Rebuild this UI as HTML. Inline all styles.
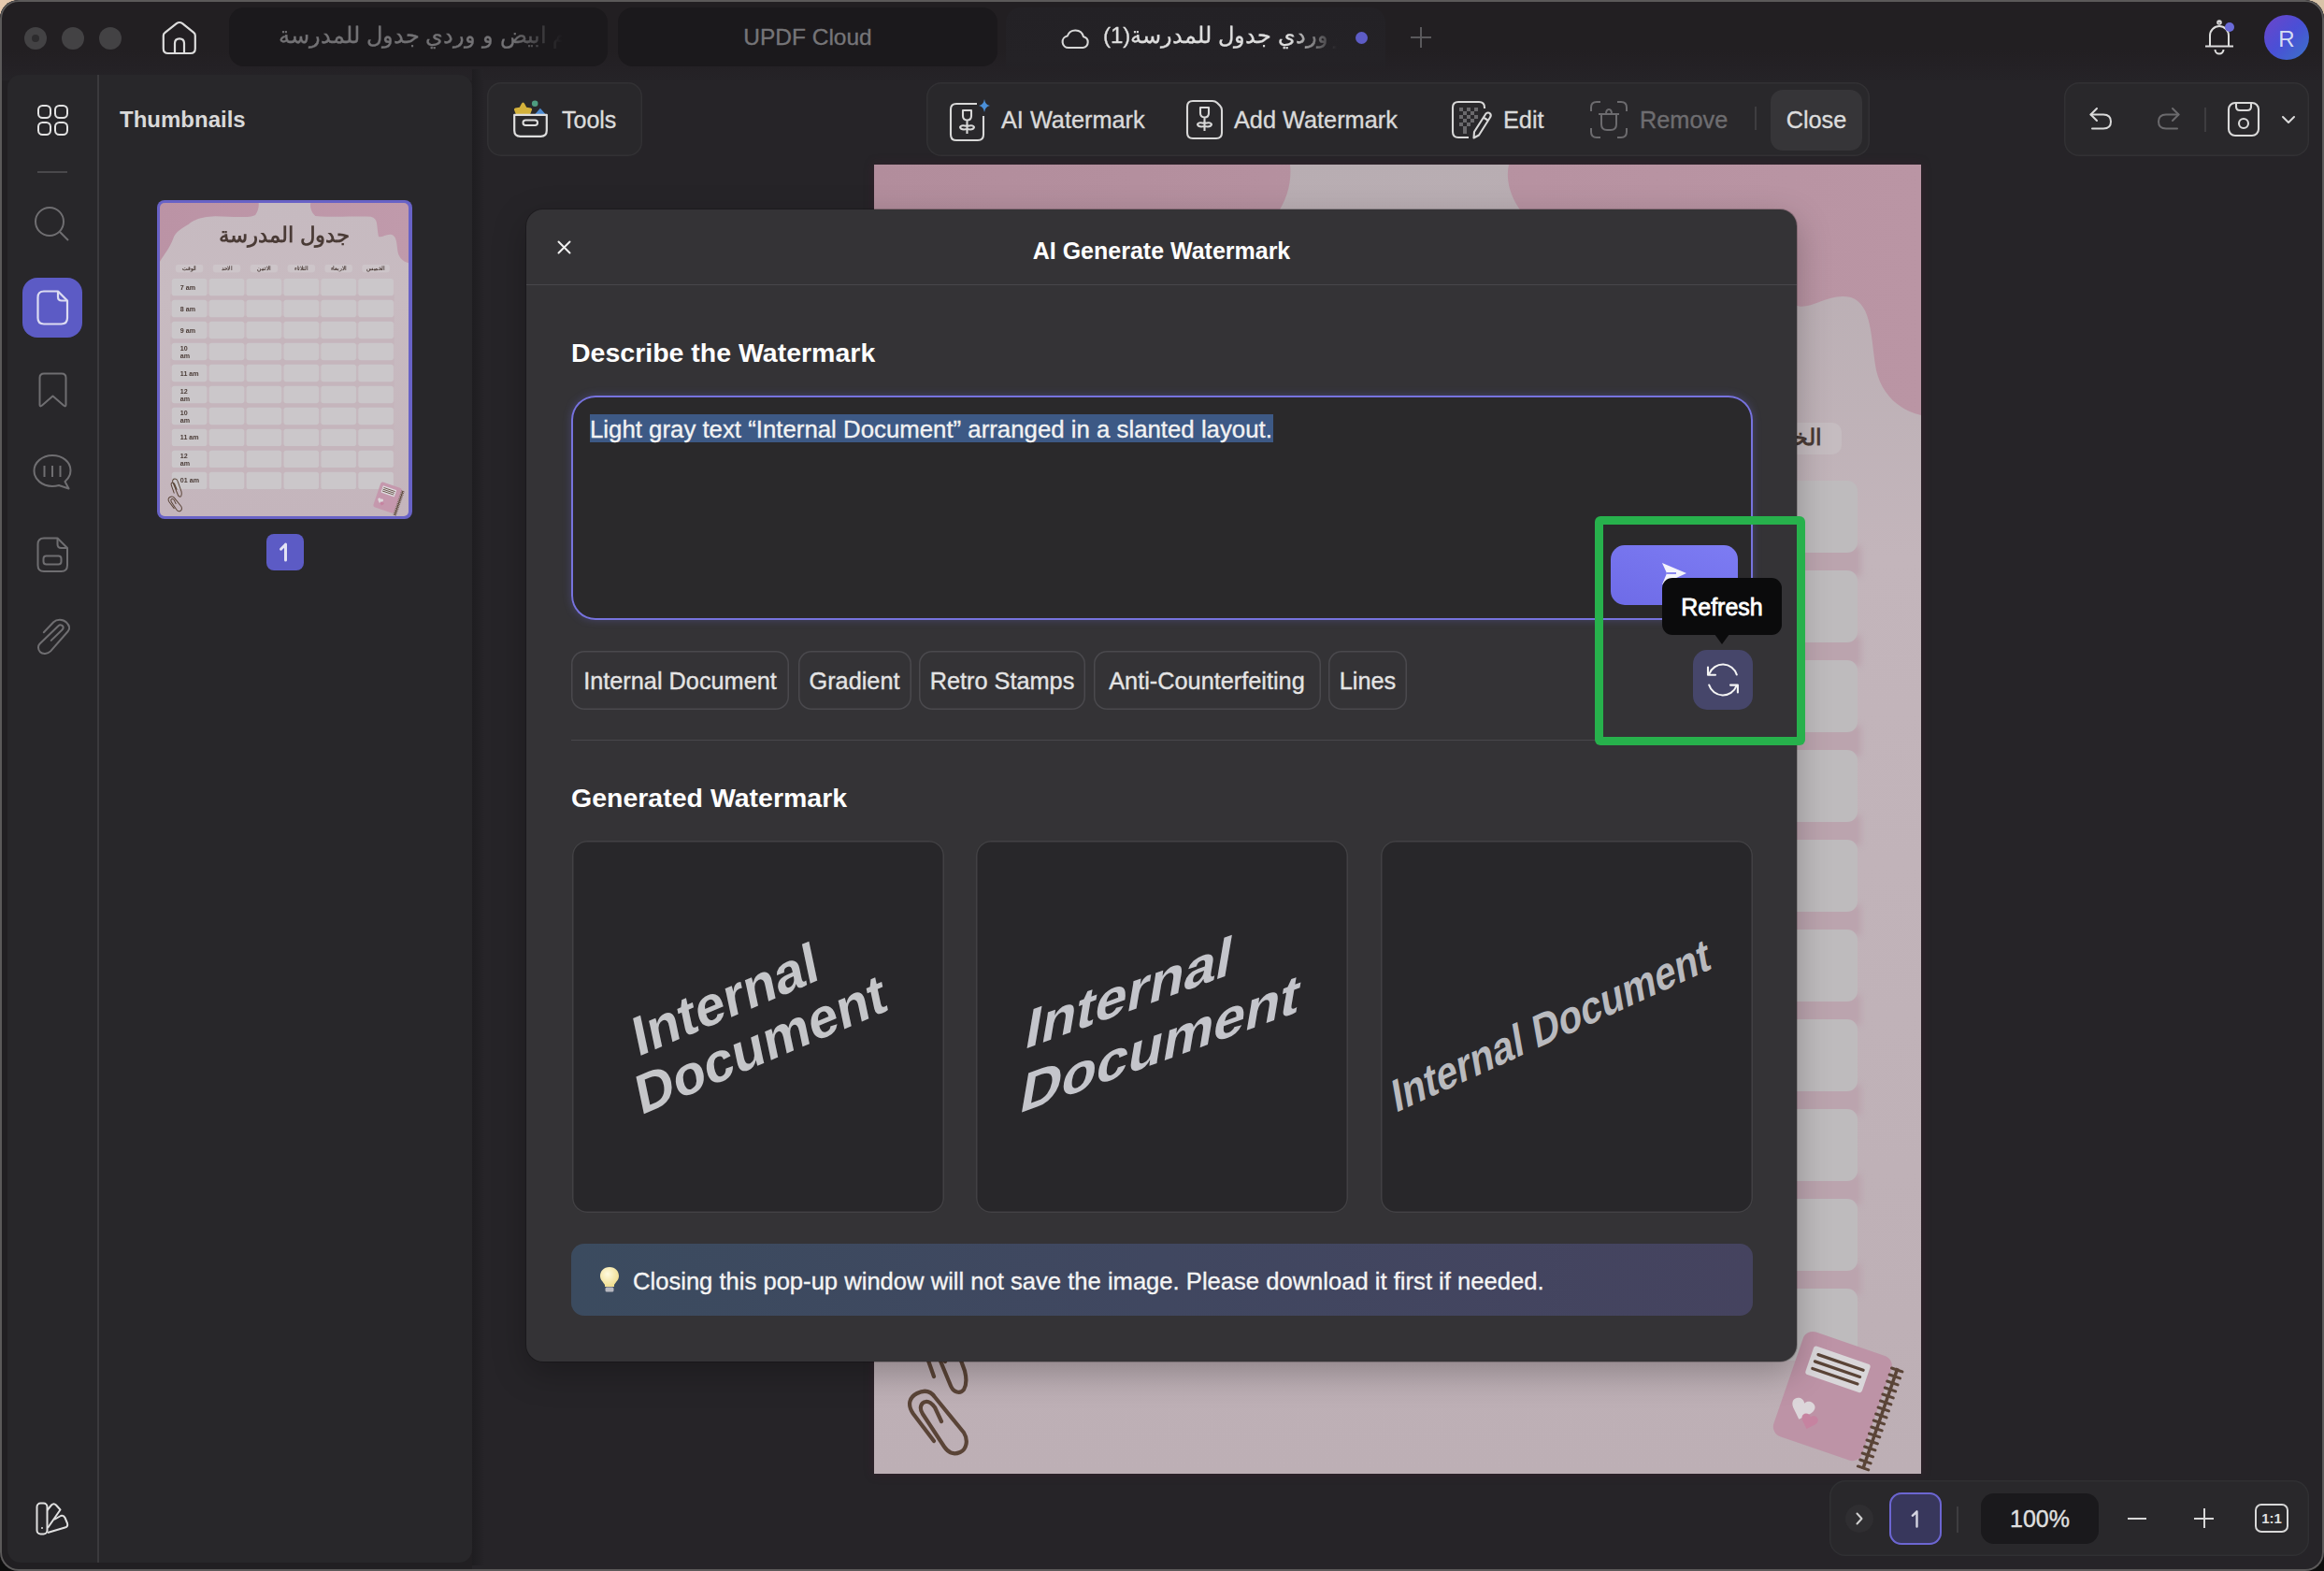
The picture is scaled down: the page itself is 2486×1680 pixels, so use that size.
<!DOCTYPE html>
<html><head><meta charset="utf-8">
<style>
*{box-sizing:border-box;margin:0;padding:0}
html,body{width:2486px;height:1680px;overflow:hidden;background:#0d0d0d}
body{font-family:"Liberation Sans",sans-serif;position:relative}
.a{position:absolute}
.win{left:0;top:0;width:2486px;height:1680px;border-radius:20px;background:#211f22;overflow:hidden;box-shadow:inset 0 0 0 2px #5a5858}
svg{position:absolute;overflow:visible}
.t{position:absolute;white-space:nowrap;line-height:1;-webkit-text-stroke:0.35px currentColor}
.t[style*="font-weight:bold"]{-webkit-text-stroke:0}
</style></head><body>
<div class="a" style="left:0;top:0;width:60px;height:30px;background:linear-gradient(90deg,#e8cbb0,#cdb79f)"></div>
<div class="a" style="right:0;top:0;width:40px;height:30px;background:#d8c3a8"></div>
<div class="a win">
<!-- TITLEBAR -->
<div class="a" style="left:0;top:0;width:2486px;height:86px;background:linear-gradient(180deg,#221f22 0%,#221f22 62%,#242125 84%,#252327 100%)"></div>
<div class="a" style="left:26px;top:29px;width:24px;height:24px;border-radius:50%;background:#434244"></div>
<div class="a" style="left:34px;top:37px;width:8px;height:8px;border-radius:50%;background:#2d2c2e"></div>
<div class="a" style="left:66px;top:29px;width:24px;height:24px;border-radius:50%;background:#434244"></div>
<div class="a" style="left:106px;top:29px;width:24px;height:24px;border-radius:50%;background:#434244"></div>
<svg style="left:173px;top:22px" width="38" height="37" viewBox="0 0 38 37" fill="none" stroke="#dcdcdc" stroke-width="2.2" stroke-linejoin="round"><path d="M3.5 12.8 L15.8 3.2 Q19 0.8 22.2 3.2 L34.3 12.8 Q35.8 14 35.8 16 V30 Q35.8 35 30.8 35 H6.8 Q1.8 35 1.8 30 V16 Q1.8 14 3.5 12.8 Z"/><path d="M14 35 V24.3 Q14 19.3 19 19.3 Q24 19.3 24 24.3 V35"/></svg>
<div class="a" style="left:245px;top:8px;width:405px;height:63px;border-radius:16px;background:#1b191c"></div>
<div class="a" style="left:298px;top:20px;width:304px;height:42px;overflow:hidden;-webkit-mask-image:linear-gradient(90deg,#000 82%,transparent 100%)"><div class="t" dir="rtl" style="left:0;top:6px;font-size:24px;color:#737275">نظام ابيض و وردي جدول للمدرسة</div></div>
<div class="a" style="left:661px;top:8px;width:406px;height:63px;border-radius:16px;background:#1b191c"></div>
<div class="t" style="left:661px;top:28px;width:406px;text-align:center;font-size:24.5px;color:#767578">UPDF Cloud</div>
<div class="a" style="left:1076px;top:8px;width:406px;height:70px;border-radius:16px 16px 0 0;background:linear-gradient(180deg,#232125,#242226 80%,rgba(36,34,38,0))"></div>
<svg style="left:1135px;top:27px" width="31" height="26" viewBox="0 0 31 26"><path d="M8 24 H23.5 A6 6 0 0 0 24 12.2 A9 9 0 0 0 6.8 11.5 A6.3 6.3 0 0 0 8 24 Z" fill="none" stroke="#d8d8d8" stroke-width="2.1" stroke-linejoin="round"/></svg>
<div class="a" style="left:1180px;top:20px;width:250px;height:42px;overflow:hidden;-webkit-mask-image:linear-gradient(90deg,#000 80%,transparent 100%)"><div class="t" dir="rtl" style="left:0;top:6px;font-size:24px;color:#dedede">نظام ابيض و وردي جدول للمدرسة(1)</div></div>
<div class="a" style="left:1450px;top:34px;width:13px;height:13px;border-radius:50%;background:#5d5cc6"></div>
<div class="a" style="left:1509px;top:39px;width:22px;height:2px;background:#5a595c"></div>
<div class="a" style="left:1519px;top:29px;width:2px;height:22px;background:#5a595c"></div>
<svg style="left:2358px;top:20px" width="32" height="40" viewBox="0 0 32 40"><path d="M16 4.5 V2.5 M6 29 V18 A10 10 0 0 1 26 18 V29 M1 29.5 H31 M11.5 33 A4.5 4.5 0 0 0 20.5 33" fill="none" stroke="#dcdcdc" stroke-width="2"/><circle cx="16" cy="4" r="2" fill="none" stroke="#dcdcdc" stroke-width="1.6"/></svg>
<div class="a" style="left:2380px;top:24px;width:10px;height:10px;border-radius:50%;background:#6a6ad8"></div>
<div class="a" style="left:2422px;top:16px;width:48px;height:48px;border-radius:50%;background:linear-gradient(135deg,#6d45c9 0%,#4a4fd6 50%,#3a74c8 100%)"></div>
<div class="t" style="left:2422px;top:30px;width:48px;text-align:center;font-size:24px;-webkit-text-stroke:0;color:#d6ddf2">R</div>
<!-- LEFT PANEL -->
<div class="a" style="left:0;top:86px;width:2486px;height:1594px;background:#211f22"></div>
<div class="a" style="left:8px;top:80px;width:497px;height:1591px;border-radius:14px;background:#28272a"></div>
<div class="a" style="left:104px;top:80px;width:1.5px;height:1591px;background:#3b3a3d"></div>
<svg style="left:40px;top:112px" width="33" height="33" viewBox="0 0 33 33" fill="none" stroke="#e2e2e2" stroke-width="2"><rect x="1" y="1" width="13" height="13" rx="4.5"/><rect x="19" y="1" width="13" height="13" rx="4.5"/><rect x="1" y="19" width="13" height="13" rx="4.5"/><rect x="19" y="19" width="13" height="13" rx="4.5"/></svg>
<div class="a" style="left:40px;top:183px;width:32px;height:1.5px;background:#49484b"></div>
<svg style="left:36px;top:220px" width="40" height="40" viewBox="0 0 40 40" fill="none" stroke="#6f6e71" stroke-width="2"><circle cx="17" cy="17" r="15"/><path d="M27.8 27.8 L37 37"/></svg>
<div class="a" style="left:24px;top:297px;width:64px;height:64px;border-radius:16px;background:#5c5bc5"></div>
<svg style="left:39px;top:310px" width="35" height="38" viewBox="0 0 35 38" fill="none" stroke="#dcdcf2" stroke-width="2.2" stroke-linejoin="round"><path d="M8 1.5 H23 L33 11.5 V30 Q33 36.5 26.5 36.5 H8 Q1.5 36.5 1.5 30 V8 Q1.5 1.5 8 1.5 Z"/><path d="M23 1.5 V7.5 Q23 11.5 27 11.5 H33"/></svg>
<svg style="left:41px;top:398px" width="31" height="39" viewBox="0 0 31 39" fill="none" stroke="#6f6e71" stroke-width="2" stroke-linejoin="round"><path d="M6 1.5 H25 Q29.5 1.5 29.5 6 V35 Q29.5 37.5 27 35.5 L15.5 25.5 L4 35.5 Q1.5 37.5 1.5 35 V6 Q1.5 1.5 6 1.5 Z"/></svg>
<svg style="left:35px;top:485px" width="43" height="40" viewBox="0 0 43 40" fill="none" stroke="#6f6e71" stroke-width="2" stroke-linejoin="round"><path d="M21 2 C32 2 40.5 9 40.5 18 C40.5 23 38 27 34.5 30 L38.5 37.5 L28 34 C25.8 34.6 23.5 35 21 35 C10 35 1.5 27.5 1.5 18.5 C1.5 9.5 10 2 21 2 Z"/><path d="M12.5 13 V25 M21 13 V25 M29.5 13 V25"/></svg>
<svg style="left:39px;top:574px" width="35" height="39" viewBox="0 0 35 39" fill="none" stroke="#6f6e71" stroke-width="2" stroke-linejoin="round"><path d="M8 1.5 H22.5 L33 12 V30.5 Q33 37 26.5 37 H8 Q1.5 37 1.5 30.5 V8 Q1.5 1.5 8 1.5 Z"/><path d="M22.5 1.5 V8 Q22.5 12 26.5 12 H33"/><rect x="7.5" y="20.5" width="19" height="9" rx="3"/></svg>
<svg style="left:40px;top:661px" width="36" height="40" viewBox="0 0 36 40" fill="none" stroke="#6f6e71" stroke-width="2" stroke-linecap="round" stroke-linejoin="round"><path d="M6.8 15.3 L17.3 4.2 C20.5 1 27 0.5 31 4.5 C34.5 8 34.8 11.5 32.8 14 L14.1 35.4 C11 38.5 5.5 38.8 3 36.2 C0.2 33.2 0.5 29.5 2.5 27.5 L22.5 8.3 C24 6.8 26.5 7.2 27.3 8.8 C28 10.2 27.6 11.5 26.5 12.5 L14.7 23.9"/></svg>
<div class="t" style="left:128px;top:116px;font-size:24px;font-weight:bold;color:#d9d9d9">Thumbnails</div>
<div class="a" style="left:168px;top:214px;width:273px;height:341px;border-radius:8px;background:#6862c6"></div>
<div class="a" style="left:171px;top:217px;width:266px;height:335px;overflow:hidden;border-radius:5px"><div class="a" style="left:0;top:0;width:1120px;height:1400px;transform-origin:0 0;transform:scale(0.2375,0.2393)"><div class="a" style="left:0;top:0;width:1120px;height:1400px;background:linear-gradient(180deg,#c8bbc1,#c4b5bc)"></div>
<div class="a" style="left:0;top:0;width:1120px;height:280px;background:linear-gradient(90deg,#bb93a5,#c09aab)"></div>
<svg style="left:0;top:0" width="1120" height="1400" viewBox="0 0 1120 1400"><defs><linearGradient id="gt" x1="0" y1="0" x2="0" y2="1"><stop offset="0" stop-color="#c6bac0"/><stop offset="0.3" stop-color="#c8bbc1"/><stop offset="1" stop-color="#c4b5bc"/></linearGradient></defs><path d="M445 0 C447 18 442 38 430 54 C405 68 330 62 250 60 C170 62 145 85 130 95 C95 115 70 130 60 160 C45 200 20 230 0 262 V1400 H1120 V268 C1095 262 1078 245 1072 220 C1066 185 1068 150 1045 142 C1020 136 1000 158 985 150 C975 100 985 70 950 62 C880 58 790 66 700 58 C686 46 674 22 679 0 Z" fill="url(#gt)"/></svg>
<div class="t" dir="rtl" style="left:0;top:96px;width:1120px;text-align:center;font-size:96px;font-weight:bold;color:#4a3b36">جدول المدرسة</div>
<div class="a" style="left:71px;top:276px;width:124px;height:34px;border-radius:10px;background:#cdc5c9"></div>
<div class="t" dir="rtl" style="left:71px;top:280px;width:124px;text-align:center;font-size:24px;font-weight:bold;color:#4a3b36">الوقت</div>
<div class="a" style="left:239px;top:276px;width:124px;height:34px;border-radius:10px;background:#cdc5c9"></div>
<div class="t" dir="rtl" style="left:239px;top:280px;width:124px;text-align:center;font-size:24px;font-weight:bold;color:#4a3b36">الاحد</div>
<div class="a" style="left:407px;top:276px;width:124px;height:34px;border-radius:10px;background:#cdc5c9"></div>
<div class="t" dir="rtl" style="left:407px;top:280px;width:124px;text-align:center;font-size:24px;font-weight:bold;color:#4a3b36">الاثنين</div>
<div class="a" style="left:575px;top:276px;width:124px;height:34px;border-radius:10px;background:#cdc5c9"></div>
<div class="t" dir="rtl" style="left:575px;top:280px;width:124px;text-align:center;font-size:24px;font-weight:bold;color:#4a3b36">الثلاثاء</div>
<div class="a" style="left:743px;top:276px;width:124px;height:34px;border-radius:10px;background:#cdc5c9"></div>
<div class="t" dir="rtl" style="left:743px;top:280px;width:124px;text-align:center;font-size:24px;font-weight:bold;color:#4a3b36">الاربعاء</div>
<div class="a" style="left:911px;top:276px;width:124px;height:34px;border-radius:10px;background:#cdc5c9"></div>
<div class="t" dir="rtl" style="left:911px;top:280px;width:124px;text-align:center;font-size:24px;font-weight:bold;color:#4a3b36">الخميس</div>
<div class="a" style="left:48px;top:408px;width:1008px;height:32px;background:#c5b5bc;filter:blur(3px)"></div>
<div class="a" style="left:54px;top:338px;width:158px;height:77px;border-radius:11px;background:#cbc7ca"></div>
<div class="a" style="left:222px;top:338px;width:158px;height:77px;border-radius:11px;background:#cbc7ca"></div>
<div class="a" style="left:390px;top:338px;width:158px;height:77px;border-radius:11px;background:#cbc7ca"></div>
<div class="a" style="left:558px;top:338px;width:158px;height:77px;border-radius:11px;background:#cbc7ca"></div>
<div class="a" style="left:726px;top:338px;width:158px;height:77px;border-radius:11px;background:#cbc7ca"></div>
<div class="a" style="left:894px;top:338px;width:158px;height:77px;border-radius:11px;background:#cbc7ca"></div>
<div class="t" style="left:92px;top:362px;font-size:30px;font-weight:bold;color:#4a3b36">7 am</div>
<div class="a" style="left:48px;top:504px;width:1008px;height:32px;background:#c5b5bc;filter:blur(3px)"></div>
<div class="a" style="left:54px;top:434px;width:158px;height:77px;border-radius:11px;background:#cbc7ca"></div>
<div class="a" style="left:222px;top:434px;width:158px;height:77px;border-radius:11px;background:#cbc7ca"></div>
<div class="a" style="left:390px;top:434px;width:158px;height:77px;border-radius:11px;background:#cbc7ca"></div>
<div class="a" style="left:558px;top:434px;width:158px;height:77px;border-radius:11px;background:#cbc7ca"></div>
<div class="a" style="left:726px;top:434px;width:158px;height:77px;border-radius:11px;background:#cbc7ca"></div>
<div class="a" style="left:894px;top:434px;width:158px;height:77px;border-radius:11px;background:#cbc7ca"></div>
<div class="t" style="left:92px;top:458px;font-size:30px;font-weight:bold;color:#4a3b36">8 am</div>
<div class="a" style="left:48px;top:600px;width:1008px;height:32px;background:#c5b5bc;filter:blur(3px)"></div>
<div class="a" style="left:54px;top:530px;width:158px;height:77px;border-radius:11px;background:#cbc7ca"></div>
<div class="a" style="left:222px;top:530px;width:158px;height:77px;border-radius:11px;background:#cbc7ca"></div>
<div class="a" style="left:390px;top:530px;width:158px;height:77px;border-radius:11px;background:#cbc7ca"></div>
<div class="a" style="left:558px;top:530px;width:158px;height:77px;border-radius:11px;background:#cbc7ca"></div>
<div class="a" style="left:726px;top:530px;width:158px;height:77px;border-radius:11px;background:#cbc7ca"></div>
<div class="a" style="left:894px;top:530px;width:158px;height:77px;border-radius:11px;background:#cbc7ca"></div>
<div class="t" style="left:92px;top:554px;font-size:30px;font-weight:bold;color:#4a3b36">9 am</div>
<div class="a" style="left:48px;top:696px;width:1008px;height:32px;background:#c5b5bc;filter:blur(3px)"></div>
<div class="a" style="left:54px;top:626px;width:158px;height:77px;border-radius:11px;background:#cbc7ca"></div>
<div class="a" style="left:222px;top:626px;width:158px;height:77px;border-radius:11px;background:#cbc7ca"></div>
<div class="a" style="left:390px;top:626px;width:158px;height:77px;border-radius:11px;background:#cbc7ca"></div>
<div class="a" style="left:558px;top:626px;width:158px;height:77px;border-radius:11px;background:#cbc7ca"></div>
<div class="a" style="left:726px;top:626px;width:158px;height:77px;border-radius:11px;background:#cbc7ca"></div>
<div class="a" style="left:894px;top:626px;width:158px;height:77px;border-radius:11px;background:#cbc7ca"></div>
<div class="a" style="left:92px;top:634px;font-size:30px;line-height:34px;font-weight:bold;color:#4a3b36">10<br>am</div>
<div class="a" style="left:48px;top:792px;width:1008px;height:32px;background:#c5b5bc;filter:blur(3px)"></div>
<div class="a" style="left:54px;top:722px;width:158px;height:77px;border-radius:11px;background:#cbc7ca"></div>
<div class="a" style="left:222px;top:722px;width:158px;height:77px;border-radius:11px;background:#cbc7ca"></div>
<div class="a" style="left:390px;top:722px;width:158px;height:77px;border-radius:11px;background:#cbc7ca"></div>
<div class="a" style="left:558px;top:722px;width:158px;height:77px;border-radius:11px;background:#cbc7ca"></div>
<div class="a" style="left:726px;top:722px;width:158px;height:77px;border-radius:11px;background:#cbc7ca"></div>
<div class="a" style="left:894px;top:722px;width:158px;height:77px;border-radius:11px;background:#cbc7ca"></div>
<div class="t" style="left:92px;top:746px;font-size:30px;font-weight:bold;color:#4a3b36">11 am</div>
<div class="a" style="left:48px;top:888px;width:1008px;height:32px;background:#c5b5bc;filter:blur(3px)"></div>
<div class="a" style="left:54px;top:818px;width:158px;height:77px;border-radius:11px;background:#cbc7ca"></div>
<div class="a" style="left:222px;top:818px;width:158px;height:77px;border-radius:11px;background:#cbc7ca"></div>
<div class="a" style="left:390px;top:818px;width:158px;height:77px;border-radius:11px;background:#cbc7ca"></div>
<div class="a" style="left:558px;top:818px;width:158px;height:77px;border-radius:11px;background:#cbc7ca"></div>
<div class="a" style="left:726px;top:818px;width:158px;height:77px;border-radius:11px;background:#cbc7ca"></div>
<div class="a" style="left:894px;top:818px;width:158px;height:77px;border-radius:11px;background:#cbc7ca"></div>
<div class="a" style="left:92px;top:826px;font-size:30px;line-height:34px;font-weight:bold;color:#4a3b36">12<br>am</div>
<div class="a" style="left:48px;top:984px;width:1008px;height:32px;background:#c5b5bc;filter:blur(3px)"></div>
<div class="a" style="left:54px;top:914px;width:158px;height:77px;border-radius:11px;background:#cbc7ca"></div>
<div class="a" style="left:222px;top:914px;width:158px;height:77px;border-radius:11px;background:#cbc7ca"></div>
<div class="a" style="left:390px;top:914px;width:158px;height:77px;border-radius:11px;background:#cbc7ca"></div>
<div class="a" style="left:558px;top:914px;width:158px;height:77px;border-radius:11px;background:#cbc7ca"></div>
<div class="a" style="left:726px;top:914px;width:158px;height:77px;border-radius:11px;background:#cbc7ca"></div>
<div class="a" style="left:894px;top:914px;width:158px;height:77px;border-radius:11px;background:#cbc7ca"></div>
<div class="a" style="left:92px;top:922px;font-size:30px;line-height:34px;font-weight:bold;color:#4a3b36">10<br>am</div>
<div class="a" style="left:48px;top:1080px;width:1008px;height:32px;background:#c5b5bc;filter:blur(3px)"></div>
<div class="a" style="left:54px;top:1010px;width:158px;height:77px;border-radius:11px;background:#cbc7ca"></div>
<div class="a" style="left:222px;top:1010px;width:158px;height:77px;border-radius:11px;background:#cbc7ca"></div>
<div class="a" style="left:390px;top:1010px;width:158px;height:77px;border-radius:11px;background:#cbc7ca"></div>
<div class="a" style="left:558px;top:1010px;width:158px;height:77px;border-radius:11px;background:#cbc7ca"></div>
<div class="a" style="left:726px;top:1010px;width:158px;height:77px;border-radius:11px;background:#cbc7ca"></div>
<div class="a" style="left:894px;top:1010px;width:158px;height:77px;border-radius:11px;background:#cbc7ca"></div>
<div class="t" style="left:92px;top:1034px;font-size:30px;font-weight:bold;color:#4a3b36">11 am</div>
<div class="a" style="left:48px;top:1176px;width:1008px;height:32px;background:#c5b5bc;filter:blur(3px)"></div>
<div class="a" style="left:54px;top:1106px;width:158px;height:77px;border-radius:11px;background:#cbc7ca"></div>
<div class="a" style="left:222px;top:1106px;width:158px;height:77px;border-radius:11px;background:#cbc7ca"></div>
<div class="a" style="left:390px;top:1106px;width:158px;height:77px;border-radius:11px;background:#cbc7ca"></div>
<div class="a" style="left:558px;top:1106px;width:158px;height:77px;border-radius:11px;background:#cbc7ca"></div>
<div class="a" style="left:726px;top:1106px;width:158px;height:77px;border-radius:11px;background:#cbc7ca"></div>
<div class="a" style="left:894px;top:1106px;width:158px;height:77px;border-radius:11px;background:#cbc7ca"></div>
<div class="a" style="left:92px;top:1114px;font-size:30px;line-height:34px;font-weight:bold;color:#4a3b36">12<br>am</div>
<div class="a" style="left:54px;top:1202px;width:158px;height:77px;border-radius:11px;background:#cbc7ca"></div>
<div class="a" style="left:222px;top:1202px;width:158px;height:77px;border-radius:11px;background:#cbc7ca"></div>
<div class="a" style="left:390px;top:1202px;width:158px;height:77px;border-radius:11px;background:#cbc7ca"></div>
<div class="a" style="left:558px;top:1202px;width:158px;height:77px;border-radius:11px;background:#cbc7ca"></div>
<div class="a" style="left:726px;top:1202px;width:158px;height:77px;border-radius:11px;background:#cbc7ca"></div>
<div class="a" style="left:894px;top:1202px;width:158px;height:77px;border-radius:11px;background:#cbc7ca"></div>
<div class="t" style="left:92px;top:1226px;font-size:30px;font-weight:bold;color:#4a3b36">01 am</div>
<svg style="left:0;top:0" width="1120" height="1400" viewBox="0 0 1120 1400" fill="none" stroke="#5a4437" stroke-width="4.2" stroke-linecap="round" stroke-linejoin="round"><path d="M64 1365 L42 1336 C35 1326 38 1318 46 1314 C54 1310 60 1311 65 1318 L96 1356 C101 1364 99 1374 92 1377 C85 1380 79 1377 75 1371 L52 1336 C48 1330 50 1324 55 1323 C59 1322 62 1325 65 1329 L72 1344"/><path d="M64 1296 L52 1262 C49 1254 53 1249 58 1249 C62 1249 64 1252 66 1256 L76 1280 M82 1306 L58 1248 C55 1240 60 1233 68 1233 C74 1233 78 1237 80 1243 L97 1290 C99 1298 99 1305 96 1310 C92 1315 85 1313 82 1306"/></svg>
<svg style="left:940px;top:1230px" width="180" height="170" viewBox="0 0 180 170"><g transform="translate(85 88) rotate(19)"><rect x="-50" y="-60" width="100" height="118" rx="11" fill="#c598ad"/><rect x="-36" y="-46" width="64" height="32" rx="3" fill="#dedade"/><path d="M-29 -38 H22 M-30 -30 H21 M-30 -22 H21" stroke="#5a4437" stroke-width="3.2" stroke-linecap="round"/><path d="M56 -52 V62" stroke="#5a4437" stroke-width="3.5"/><path d="M50 -50.0 H62 M50 -42.6 H62 M50 -35.2 H62 M50 -27.8 H62 M50 -20.4 H62 M50 -13.0 H62 M50 -5.6 H62 M50 1.8 H62 M50 9.2 H62 M50 16.6 H62 M50 24.0 H62 M50 31.4 H62 M50 38.8 H62 M50 46.2 H62 M50 53.6 H62 M50 61.0 H62 " stroke="#5a4437" stroke-width="3" stroke-linecap="round"/><path d="M-36 24 C-44 14 -30 8 -26 16 C-22 8 -8 14 -16 24 L-26 34 Z" fill="#dcd6da"/><path d="M-22 34 C-28 27 -18 22 -15 28 C-12 22 -2 27 -8 34 L-15 41 Z" fill="#c683a0"/></g></svg></div></div>
<div class="a" style="left:285px;top:571px;width:40px;height:39px;border-radius:8px;background:#5c5bc5"></div>
<svg style="left:298px;top:580px" width="12" height="21" viewBox="0 0 12 21" fill="none" stroke="#e2e2f4" stroke-width="3" stroke-linecap="round" stroke-linejoin="round"><path d="M7.5 2 V19 M2.5 7.2 L7.5 2.2"/></svg>
<svg style="left:38px;top:1606px" width="37" height="37" viewBox="0 0 37 37" fill="none" stroke="#e0e0e0" stroke-width="2" stroke-linejoin="round"><rect x="1.5" y="1.5" width="11" height="33" rx="4"/><path d="M12.5 9 L17 3.5 Q19.5 1 22 3.5 L26.5 8.5 L13 28"/><path d="M13 33 L31.5 27.5 Q35 26.5 34 23 L31.5 17 Q30 14 27 15 L20 19"/><circle cx="7" cy="28" r="1" fill="#e0e0e0" stroke="none"/></svg>
<!-- MAIN -->
<div class="a" style="left:505px;top:86px;width:1981px;height:1594px;background:#262428"></div>
<div class="a" style="left:505px;top:74px;width:12px;height:1600px;background:linear-gradient(90deg,#1e1d20,#252327)"></div>
<!-- toolbar -->
<div class="a" style="left:521px;top:88px;width:166px;height:79px;border-radius:15px;background:#29282b;box-shadow:inset 0 0 0 1.5px #323134"></div>
<svg style="left:548px;top:108px" width="40" height="40" viewBox="0 0 40 40"><path d="M11.5 1.5 Q12.5 1.5 13.2 3 L15.2 6.8 L19.8 7.6 Q21.5 8 21 9.6 L19 14.5 H4 L2 9.6 Q1.6 8 3.2 7.6 L7.8 6.8 L9.8 3 Q10.5 1.5 11.5 1.5 Z" fill="#d3b13b"/><circle cx="24.2" cy="2.8" r="3.3" fill="#4e9d80"/><path d="M29.9 7.8 L35.6 14.3 H24.2 Z" fill="#4a8ad2"/><path d="M2.2 14.8 H36.8 V31.5 Q36.8 37.8 30.5 37.8 H8.5 Q2.2 37.8 2.2 31.5 Z" fill="#29282b" stroke="#dedede" stroke-width="2.2" stroke-linejoin="round"/><rect x="11.5" y="20.5" width="15.5" height="5.5" rx="2.75" fill="none" stroke="#dedede" stroke-width="2"/></svg>
<div class="t" style="left:601px;top:116px;font-size:25px;color:#dcdcdc">Tools</div>
<div class="a" style="left:991px;top:88px;width:1009px;height:79px;border-radius:16px;background:#29282b;box-shadow:inset 0 0 0 1.5px #323134"></div>
<svg style="left:1014px;top:104px" width="48" height="48" viewBox="0 0 48 48" fill="none" stroke="#d8d8d8" stroke-width="2.1"><path d="M31 7 H9 Q3 7 3 13 V40 Q3 46 9 46 H32 Q38 46 38 40 V20"/><path d="M16 14 H25 V20 Q25 24.5 20.5 24.5 Q16 24.5 16 20 Z M20.5 24.5 V39 M20.5 31 Q14 29 13 32 Q14 35.5 20.5 34 M20.5 31 Q27 29 28 32 Q27 35.5 20.5 34" stroke-linejoin="round"/><path d="M39 2 Q39.8 8 45 9 Q39.8 10 39 16 Q38.2 10 33 9 Q38.2 8 39 2 Z" fill="#4a8fd8" stroke="none"/></svg>
<div class="t" style="left:1071px;top:116px;font-size:25.3px;color:#dadada">AI Watermark</div>
<svg style="left:1268px;top:106px" width="42" height="44" viewBox="0 0 42 44" fill="none" stroke="#d8d8d8" stroke-width="2.1"><path d="M8 2 H29 Q32 2 34 4 L37 7 Q39 9 39 12 V36 Q39 42 33 42 H8 Q2 42 2 36 V8 Q2 2 8 2 Z"/><path d="M16 9 H25 V15 Q25 19.5 20.5 19.5 Q16 19.5 16 15 Z M20.5 19.5 V34 M20.5 26 Q14 24 13 27 Q14 30.5 20.5 29 M20.5 26 Q27 24 28 27 Q27 30.5 20.5 29" stroke-linejoin="round"/></svg>
<div class="t" style="left:1320px;top:116px;font-size:25.3px;color:#dadada">Add Watermark</div>
<svg style="left:1552px;top:107px" width="46" height="42" viewBox="0 0 46 42" fill="none" stroke="#d8d8d8" stroke-width="2.1"><path d="M19 40 H8 Q2 40 2 34 V8 Q2 2 8 2 H30 Q36 2 36 8 V9"/><g fill="#6a696c" stroke="none"><rect x="9" y="8" width="4" height="4"/><rect x="17" y="8" width="4" height="4"/><rect x="25" y="8" width="4" height="4"/><rect x="13" y="12" width="4" height="4"/><rect x="21" y="12" width="4" height="4"/><rect x="9" y="16" width="4" height="4"/><rect x="17" y="16" width="4" height="4"/><rect x="25" y="16" width="4" height="4"/><rect x="13" y="20" width="4" height="4"/><rect x="21" y="20" width="4" height="4"/><rect x="9" y="24" width="4" height="4"/><rect x="17" y="24" width="4" height="4"/><rect x="13" y="28" width="4" height="4"/><rect x="13" y="32" width="4" height="4"/></g><path d="M37.5 14.5 Q40 12.5 42 14.5 Q43.5 16.5 42 18.5 L30 37.5 L24.5 40.5 L25 34 Z" stroke-linejoin="round"/><path d="M34.5 18.5 L39.5 21.5"/></svg>
<div class="t" style="left:1608px;top:116px;font-size:25.3px;color:#dadada">Edit</div>
<svg style="left:1700px;top:107px" width="42" height="42" viewBox="0 0 42 42" fill="none" stroke="#6c6b6e" stroke-width="2"><path d="M2 12 V8 Q2 2 8 2 H12 M30 2 H34 Q40 2 40 8 V12 M40 30 V34 Q40 40 34 40 H30 M12 40 H8 Q2 40 2 34 V30"/><path d="M10 15 H32 M13 15 V26 Q13 32 19 32 H23 Q29 32 29 26 V15 M18 15 Q18 10 21 10 Q24 10 24 15"/></svg>
<div class="t" style="left:1754px;top:116px;font-size:25.3px;color:#6e6d70">Remove</div>
<div class="a" style="left:1877px;top:114px;width:1.5px;height:25px;background:#3e3d40"></div>
<div class="a" style="left:1894px;top:96px;width:98px;height:65px;border-radius:13px;background:#363538"></div>
<div class="t" style="left:1894px;top:116px;width:98px;text-align:center;font-size:25.3px;color:#dddddd">Close</div>
<div class="a" style="left:2208px;top:88px;width:262px;height:79px;border-radius:16px;background:#29282b;box-shadow:inset 0 0 0 1.5px #323134"></div>
<svg style="left:2234px;top:114px" width="28" height="26" viewBox="0 0 28 26" fill="none" stroke="#dadada" stroke-width="2" stroke-linecap="round" stroke-linejoin="round"><path d="M9 2 L2.5 8.5 L9 15"/><path d="M2.5 8.5 H16 Q24 8.5 24 16 Q24 23.5 16 23.5 H4"/></svg>
<svg style="left:2305px;top:114px" width="28" height="26" viewBox="0 0 28 26" fill="none" stroke="#6b6a6d" stroke-width="2" stroke-linecap="round" stroke-linejoin="round"><path d="M19 2 L25.5 8.5 L19 15"/><path d="M25.5 8.5 H12 Q4 8.5 4 16 Q4 23.5 12 23.5 H24"/></svg>
<div class="a" style="left:2358px;top:115px;width:1.5px;height:26px;background:#3e3d40"></div>
<svg style="left:2382px;top:108px" width="36" height="39" viewBox="0 0 36 39" fill="none" stroke="#dadada" stroke-width="2.1"><rect x="2" y="2" width="32" height="35" rx="7"/><path d="M10 2 V6 Q10 10 14 10 H22 Q26 10 26 6 V2"/><circle cx="18" cy="24" r="5"/></svg>
<svg style="left:2440px;top:123px" width="16" height="11" viewBox="0 0 16 11" fill="none" stroke="#dadada" stroke-width="2" stroke-linecap="round" stroke-linejoin="round"><path d="M2 2 L8 8 L14 2"/></svg>
<!-- PDF PAGE -->
<div class="a" style="left:935px;top:176px;width:1120px;height:1400px;box-shadow:0 0 10px rgba(70,30,50,0.45)"></div><div class="a" style="left:935px;top:176px;width:1120px;height:1400px;overflow:hidden"><div class="a" style="left:0;top:0;width:1120px;height:1400px;background:linear-gradient(180deg,#c3b5bb,#bdafb5)"></div>
<div class="a" style="left:0;top:0;width:1120px;height:280px;background:linear-gradient(90deg,#b28d9c,#ba95a4)"></div>
<svg style="left:0;top:0" width="1120" height="1400" viewBox="0 0 1120 1400"><defs><linearGradient id="gm" x1="0" y1="0" x2="0" y2="1"><stop offset="0" stop-color="#b8adb2"/><stop offset="0.3" stop-color="#c3b5bb"/><stop offset="1" stop-color="#bdafb5"/></linearGradient></defs><path d="M445 0 C447 18 442 38 430 54 C405 68 330 62 250 60 C170 62 145 85 130 95 C95 115 70 130 60 160 C45 200 20 230 0 262 V1400 H1120 V268 C1095 262 1078 245 1072 220 C1066 185 1068 150 1045 142 C1020 136 1000 158 985 150 C975 100 985 70 950 62 C880 58 790 66 700 58 C686 46 674 22 679 0 Z" fill="url(#gm)"/></svg>
<div class="t" dir="rtl" style="left:0;top:96px;width:1120px;text-align:center;font-size:96px;font-weight:bold;color:#4a3b36">جدول المدرسة</div>
<div class="a" style="left:71px;top:276px;width:124px;height:34px;border-radius:10px;background:#c5bcc0"></div>
<div class="t" dir="rtl" style="left:71px;top:280px;width:124px;text-align:center;font-size:24px;font-weight:bold;color:#4a3b36">الوقت</div>
<div class="a" style="left:239px;top:276px;width:124px;height:34px;border-radius:10px;background:#c5bcc0"></div>
<div class="t" dir="rtl" style="left:239px;top:280px;width:124px;text-align:center;font-size:24px;font-weight:bold;color:#4a3b36">الاحد</div>
<div class="a" style="left:407px;top:276px;width:124px;height:34px;border-radius:10px;background:#c5bcc0"></div>
<div class="t" dir="rtl" style="left:407px;top:280px;width:124px;text-align:center;font-size:24px;font-weight:bold;color:#4a3b36">الاثنين</div>
<div class="a" style="left:575px;top:276px;width:124px;height:34px;border-radius:10px;background:#c5bcc0"></div>
<div class="t" dir="rtl" style="left:575px;top:280px;width:124px;text-align:center;font-size:24px;font-weight:bold;color:#4a3b36">الثلاثاء</div>
<div class="a" style="left:743px;top:276px;width:124px;height:34px;border-radius:10px;background:#c5bcc0"></div>
<div class="t" dir="rtl" style="left:743px;top:280px;width:124px;text-align:center;font-size:24px;font-weight:bold;color:#4a3b36">الاربعاء</div>
<div class="a" style="left:911px;top:276px;width:124px;height:34px;border-radius:10px;background:#c5bcc0"></div>
<div class="t" dir="rtl" style="left:911px;top:280px;width:124px;text-align:center;font-size:24px;font-weight:bold;color:#4a3b36">الخميس</div>
<div class="a" style="left:48px;top:408px;width:1008px;height:32px;background:#bba4ae;filter:blur(3px)"></div>
<div class="a" style="left:54px;top:338px;width:158px;height:77px;border-radius:11px;background:#bebbbd"></div>
<div class="a" style="left:222px;top:338px;width:158px;height:77px;border-radius:11px;background:#bebbbd"></div>
<div class="a" style="left:390px;top:338px;width:158px;height:77px;border-radius:11px;background:#bebbbd"></div>
<div class="a" style="left:558px;top:338px;width:158px;height:77px;border-radius:11px;background:#bebbbd"></div>
<div class="a" style="left:726px;top:338px;width:158px;height:77px;border-radius:11px;background:#bebbbd"></div>
<div class="a" style="left:894px;top:338px;width:158px;height:77px;border-radius:11px;background:#bebbbd"></div>
<div class="t" style="left:92px;top:362px;font-size:30px;font-weight:bold;color:#4a3b36">7 am</div>
<div class="a" style="left:48px;top:504px;width:1008px;height:32px;background:#bba4ae;filter:blur(3px)"></div>
<div class="a" style="left:54px;top:434px;width:158px;height:77px;border-radius:11px;background:#bebbbd"></div>
<div class="a" style="left:222px;top:434px;width:158px;height:77px;border-radius:11px;background:#bebbbd"></div>
<div class="a" style="left:390px;top:434px;width:158px;height:77px;border-radius:11px;background:#bebbbd"></div>
<div class="a" style="left:558px;top:434px;width:158px;height:77px;border-radius:11px;background:#bebbbd"></div>
<div class="a" style="left:726px;top:434px;width:158px;height:77px;border-radius:11px;background:#bebbbd"></div>
<div class="a" style="left:894px;top:434px;width:158px;height:77px;border-radius:11px;background:#bebbbd"></div>
<div class="t" style="left:92px;top:458px;font-size:30px;font-weight:bold;color:#4a3b36">8 am</div>
<div class="a" style="left:48px;top:600px;width:1008px;height:32px;background:#bba4ae;filter:blur(3px)"></div>
<div class="a" style="left:54px;top:530px;width:158px;height:77px;border-radius:11px;background:#bebbbd"></div>
<div class="a" style="left:222px;top:530px;width:158px;height:77px;border-radius:11px;background:#bebbbd"></div>
<div class="a" style="left:390px;top:530px;width:158px;height:77px;border-radius:11px;background:#bebbbd"></div>
<div class="a" style="left:558px;top:530px;width:158px;height:77px;border-radius:11px;background:#bebbbd"></div>
<div class="a" style="left:726px;top:530px;width:158px;height:77px;border-radius:11px;background:#bebbbd"></div>
<div class="a" style="left:894px;top:530px;width:158px;height:77px;border-radius:11px;background:#bebbbd"></div>
<div class="t" style="left:92px;top:554px;font-size:30px;font-weight:bold;color:#4a3b36">9 am</div>
<div class="a" style="left:48px;top:696px;width:1008px;height:32px;background:#bba4ae;filter:blur(3px)"></div>
<div class="a" style="left:54px;top:626px;width:158px;height:77px;border-radius:11px;background:#bebbbd"></div>
<div class="a" style="left:222px;top:626px;width:158px;height:77px;border-radius:11px;background:#bebbbd"></div>
<div class="a" style="left:390px;top:626px;width:158px;height:77px;border-radius:11px;background:#bebbbd"></div>
<div class="a" style="left:558px;top:626px;width:158px;height:77px;border-radius:11px;background:#bebbbd"></div>
<div class="a" style="left:726px;top:626px;width:158px;height:77px;border-radius:11px;background:#bebbbd"></div>
<div class="a" style="left:894px;top:626px;width:158px;height:77px;border-radius:11px;background:#bebbbd"></div>
<div class="a" style="left:92px;top:634px;font-size:30px;line-height:34px;font-weight:bold;color:#4a3b36">10<br>am</div>
<div class="a" style="left:48px;top:792px;width:1008px;height:32px;background:#bba4ae;filter:blur(3px)"></div>
<div class="a" style="left:54px;top:722px;width:158px;height:77px;border-radius:11px;background:#bebbbd"></div>
<div class="a" style="left:222px;top:722px;width:158px;height:77px;border-radius:11px;background:#bebbbd"></div>
<div class="a" style="left:390px;top:722px;width:158px;height:77px;border-radius:11px;background:#bebbbd"></div>
<div class="a" style="left:558px;top:722px;width:158px;height:77px;border-radius:11px;background:#bebbbd"></div>
<div class="a" style="left:726px;top:722px;width:158px;height:77px;border-radius:11px;background:#bebbbd"></div>
<div class="a" style="left:894px;top:722px;width:158px;height:77px;border-radius:11px;background:#bebbbd"></div>
<div class="t" style="left:92px;top:746px;font-size:30px;font-weight:bold;color:#4a3b36">11 am</div>
<div class="a" style="left:48px;top:888px;width:1008px;height:32px;background:#bba4ae;filter:blur(3px)"></div>
<div class="a" style="left:54px;top:818px;width:158px;height:77px;border-radius:11px;background:#bebbbd"></div>
<div class="a" style="left:222px;top:818px;width:158px;height:77px;border-radius:11px;background:#bebbbd"></div>
<div class="a" style="left:390px;top:818px;width:158px;height:77px;border-radius:11px;background:#bebbbd"></div>
<div class="a" style="left:558px;top:818px;width:158px;height:77px;border-radius:11px;background:#bebbbd"></div>
<div class="a" style="left:726px;top:818px;width:158px;height:77px;border-radius:11px;background:#bebbbd"></div>
<div class="a" style="left:894px;top:818px;width:158px;height:77px;border-radius:11px;background:#bebbbd"></div>
<div class="a" style="left:92px;top:826px;font-size:30px;line-height:34px;font-weight:bold;color:#4a3b36">12<br>am</div>
<div class="a" style="left:48px;top:984px;width:1008px;height:32px;background:#bba4ae;filter:blur(3px)"></div>
<div class="a" style="left:54px;top:914px;width:158px;height:77px;border-radius:11px;background:#bebbbd"></div>
<div class="a" style="left:222px;top:914px;width:158px;height:77px;border-radius:11px;background:#bebbbd"></div>
<div class="a" style="left:390px;top:914px;width:158px;height:77px;border-radius:11px;background:#bebbbd"></div>
<div class="a" style="left:558px;top:914px;width:158px;height:77px;border-radius:11px;background:#bebbbd"></div>
<div class="a" style="left:726px;top:914px;width:158px;height:77px;border-radius:11px;background:#bebbbd"></div>
<div class="a" style="left:894px;top:914px;width:158px;height:77px;border-radius:11px;background:#bebbbd"></div>
<div class="a" style="left:92px;top:922px;font-size:30px;line-height:34px;font-weight:bold;color:#4a3b36">10<br>am</div>
<div class="a" style="left:48px;top:1080px;width:1008px;height:32px;background:#bba4ae;filter:blur(3px)"></div>
<div class="a" style="left:54px;top:1010px;width:158px;height:77px;border-radius:11px;background:#bebbbd"></div>
<div class="a" style="left:222px;top:1010px;width:158px;height:77px;border-radius:11px;background:#bebbbd"></div>
<div class="a" style="left:390px;top:1010px;width:158px;height:77px;border-radius:11px;background:#bebbbd"></div>
<div class="a" style="left:558px;top:1010px;width:158px;height:77px;border-radius:11px;background:#bebbbd"></div>
<div class="a" style="left:726px;top:1010px;width:158px;height:77px;border-radius:11px;background:#bebbbd"></div>
<div class="a" style="left:894px;top:1010px;width:158px;height:77px;border-radius:11px;background:#bebbbd"></div>
<div class="t" style="left:92px;top:1034px;font-size:30px;font-weight:bold;color:#4a3b36">11 am</div>
<div class="a" style="left:48px;top:1176px;width:1008px;height:32px;background:#bba4ae;filter:blur(3px)"></div>
<div class="a" style="left:54px;top:1106px;width:158px;height:77px;border-radius:11px;background:#bebbbd"></div>
<div class="a" style="left:222px;top:1106px;width:158px;height:77px;border-radius:11px;background:#bebbbd"></div>
<div class="a" style="left:390px;top:1106px;width:158px;height:77px;border-radius:11px;background:#bebbbd"></div>
<div class="a" style="left:558px;top:1106px;width:158px;height:77px;border-radius:11px;background:#bebbbd"></div>
<div class="a" style="left:726px;top:1106px;width:158px;height:77px;border-radius:11px;background:#bebbbd"></div>
<div class="a" style="left:894px;top:1106px;width:158px;height:77px;border-radius:11px;background:#bebbbd"></div>
<div class="a" style="left:92px;top:1114px;font-size:30px;line-height:34px;font-weight:bold;color:#4a3b36">12<br>am</div>
<div class="a" style="left:54px;top:1202px;width:158px;height:77px;border-radius:11px;background:#bebbbd"></div>
<div class="a" style="left:222px;top:1202px;width:158px;height:77px;border-radius:11px;background:#bebbbd"></div>
<div class="a" style="left:390px;top:1202px;width:158px;height:77px;border-radius:11px;background:#bebbbd"></div>
<div class="a" style="left:558px;top:1202px;width:158px;height:77px;border-radius:11px;background:#bebbbd"></div>
<div class="a" style="left:726px;top:1202px;width:158px;height:77px;border-radius:11px;background:#bebbbd"></div>
<div class="a" style="left:894px;top:1202px;width:158px;height:77px;border-radius:11px;background:#bebbbd"></div>
<div class="t" style="left:92px;top:1226px;font-size:30px;font-weight:bold;color:#4a3b36">01 am</div>
<svg style="left:0;top:0" width="1120" height="1400" viewBox="0 0 1120 1400" fill="none" stroke="#5a4437" stroke-width="4.2" stroke-linecap="round" stroke-linejoin="round"><path d="M64 1365 L42 1336 C35 1326 38 1318 46 1314 C54 1310 60 1311 65 1318 L96 1356 C101 1364 99 1374 92 1377 C85 1380 79 1377 75 1371 L52 1336 C48 1330 50 1324 55 1323 C59 1322 62 1325 65 1329 L72 1344"/><path d="M64 1296 L52 1262 C49 1254 53 1249 58 1249 C62 1249 64 1252 66 1256 L76 1280 M82 1306 L58 1248 C55 1240 60 1233 68 1233 C74 1233 78 1237 80 1243 L97 1290 C99 1298 99 1305 96 1310 C92 1315 85 1313 82 1306"/></svg>
<svg style="left:940px;top:1230px" width="180" height="170" viewBox="0 0 180 170"><g transform="translate(85 88) rotate(19)"><rect x="-50" y="-60" width="100" height="118" rx="11" fill="#bd93a6"/><rect x="-36" y="-46" width="64" height="32" rx="3" fill="#d9d6d9"/><path d="M-29 -38 H22 M-30 -30 H21 M-30 -22 H21" stroke="#5a4437" stroke-width="3.2" stroke-linecap="round"/><path d="M56 -52 V62" stroke="#5a4437" stroke-width="3.5"/><path d="M50 -50.0 H62 M50 -42.6 H62 M50 -35.2 H62 M50 -27.8 H62 M50 -20.4 H62 M50 -13.0 H62 M50 -5.6 H62 M50 1.8 H62 M50 9.2 H62 M50 16.6 H62 M50 24.0 H62 M50 31.4 H62 M50 38.8 H62 M50 46.2 H62 M50 53.6 H62 M50 61.0 H62 " stroke="#5a4437" stroke-width="3" stroke-linecap="round"/><path d="M-36 24 C-44 14 -30 8 -26 16 C-22 8 -8 14 -16 24 L-26 34 Z" fill="#dcd6da"/><path d="M-22 34 C-28 27 -18 22 -15 28 C-12 22 -2 27 -8 34 L-15 41 Z" fill="#c683a0"/></g></svg></div>
<!-- bottom bar -->
<div class="a" style="left:1957px;top:1583px;width:513px;height:81px;border-radius:17px;background:#29282b;box-shadow:inset 0 0 0 1.5px #303033"></div>
<div class="a" style="left:1974px;top:1609px;width:30px;height:30px;border-radius:50%;background:#2f2e31"></div>
<svg style="left:1983px;top:1616px" width="12" height="16" viewBox="0 0 12 16" fill="none" stroke="#d0d0d0" stroke-width="2" stroke-linecap="round" stroke-linejoin="round"><path d="M3.5 2.5 L8.5 8 L3.5 13.5"/></svg>
<div class="a" style="left:2021px;top:1596px;width:56px;height:56px;border-radius:13px;background:#38375c;box-shadow:inset 0 0 0 2px #6c66d2"></div>
<svg style="left:2043px;top:1614px" width="12" height="21" viewBox="0 0 12 21" fill="none" stroke="#d4d4e0" stroke-width="2.4" stroke-linecap="round" stroke-linejoin="round"><path d="M7.5 2.5 V18.5 M2.8 6.8 L7.5 2.5"/></svg>
<div class="a" style="left:2093px;top:1611px;width:1.5px;height:28px;background:#3e3d40"></div>
<div class="a" style="left:2119px;top:1597px;width:126px;height:54px;border-radius:14px;background:#1a191c"></div>
<div class="t" style="left:2119px;top:1612px;width:126px;text-align:center;font-size:25px;color:#e0e0e0">100%</div>
<div class="a" style="left:2276px;top:1623px;width:20px;height:2.2px;background:#d8d8d8"></div>
<div class="a" style="left:2347px;top:1623px;width:21px;height:2.2px;background:#d8d8d8"></div>
<div class="a" style="left:2356.5px;top:1613px;width:2.2px;height:21px;background:#d8d8d8"></div>
<div class="a" style="left:2412px;top:1608px;width:36px;height:31px;border-radius:7px;box-shadow:inset 0 0 0 2px #d8d8d8"></div>
<div class="t" style="left:2412px;top:1616px;width:36px;text-align:center;font-size:15px;font-weight:bold;color:#e0e0e0">1:1</div>
<!-- MODAL -->
<div class="a" style="left:563px;top:224px;width:1359px;height:1232px;border-radius:18px;background:#343336;box-shadow:0 12px 36px rgba(0,0,0,0.26),0 0 0 1px rgba(0,0,0,0.2)"></div>
<svg style="left:596px;top:257px" width="15" height="15" viewBox="0 0 15 15" stroke="#f0f0f0" stroke-width="2" stroke-linecap="round"><path d="M1.5 1.5 L13.5 13.5 M13.5 1.5 L1.5 13.5"/></svg>
<div class="t" style="left:563px;top:256px;width:1359px;text-align:center;font-size:25px;font-weight:bold;color:#ffffff">AI Generate Watermark</div>
<div class="a" style="left:563px;top:303.5px;width:1359px;height:1.5px;background:#48474b"></div>
<div class="t" style="left:611px;top:363px;font-size:28.5px;font-weight:bold;color:#ffffff">Describe the Watermark</div>
<div class="a" style="left:611px;top:423px;width:1264px;height:240px;border-radius:26px;background:#2a292b;box-shadow:inset 0 0 0 2px #7773de,0 0 10px rgba(113,109,227,0.30)"></div>
<div class="a" style="left:630.5px;top:443px;width:731px;height:30px;background:#3d5985"></div>
<div class="t" style="left:631px;top:447px;font-size:25.8px;color:#f2f2f2">Light gray text “Internal Document” arranged in a slanted layout.</div>
<div class="a" style="left:1723px;top:583px;width:136px;height:64px;border-radius:15px;background:linear-gradient(200deg,#7d7cf3,#6e6be7)"></div>
<svg style="left:1776px;top:600px" width="30" height="28" viewBox="0 0 30 28"><path d="M2 2 L28 13 L2 25 L7 13 Z" fill="#f4f4fb"/><path d="M7 13 H17" stroke="#8a88ee" stroke-width="2"/></svg>
<div class="a" style="left:611px;top:695.5px;width:233px;height:63px;border-radius:14px;box-shadow:inset 0 0 0 1.5px #4a494d"></div>
<div class="t" style="left:611px;top:716px;width:233px;text-align:center;font-size:25.3px;color:#e4e4e4">Internal Document</div>
<div class="a" style="left:853.5px;top:695.5px;width:121px;height:63px;border-radius:14px;box-shadow:inset 0 0 0 1.5px #4a494d"></div>
<div class="t" style="left:853.5px;top:716px;width:121px;text-align:center;font-size:25.3px;color:#e4e4e4">Gradient</div>
<div class="a" style="left:983px;top:695.5px;width:178px;height:63px;border-radius:14px;box-shadow:inset 0 0 0 1.5px #4a494d"></div>
<div class="t" style="left:983px;top:716px;width:178px;text-align:center;font-size:25.3px;color:#e4e4e4">Retro Stamps</div>
<div class="a" style="left:1169.5px;top:695.5px;width:243px;height:63px;border-radius:14px;box-shadow:inset 0 0 0 1.5px #4a494d"></div>
<div class="t" style="left:1169.5px;top:716px;width:243px;text-align:center;font-size:25.3px;color:#e4e4e4">Anti-Counterfeiting</div>
<div class="a" style="left:1421px;top:695.5px;width:84px;height:63px;border-radius:14px;box-shadow:inset 0 0 0 1.5px #4a494d"></div>
<div class="t" style="left:1421px;top:716px;width:84px;text-align:center;font-size:25.3px;color:#e4e4e4">Lines</div>
<div class="a" style="left:1811px;top:695px;width:64px;height:64px;border-radius:15px;background:#46466a"></div>
<svg style="left:1824px;top:708px" width="38" height="38" viewBox="0 0 38 38" fill="none" stroke="#f4f4f4" stroke-width="2.1" stroke-linecap="round" stroke-linejoin="round"><path d="M4.5 12.5 A15.5 15.5 0 0 1 33.8 13.5"/><path d="M3 5.5 V13.8 H11"/><path d="M4.2 24.5 A15.5 15.5 0 0 0 33.5 25.5"/><path d="M27 24.6 H34.9 V32.5"/></svg>
<div class="a" style="left:1778px;top:618px;width:128px;height:61px;border-radius:11px;background:#0b0b0c"></div>
<svg style="left:1833px;top:678px" width="18" height="12" viewBox="0 0 18 12"><path d="M1 0 H17 L9 11 Z" fill="#0b0b0c"/></svg>
<div class="t" style="left:1778px;top:637px;width:128px;text-align:center;font-size:25px;-webkit-text-stroke:0.8px #fff;color:#ffffff">Refresh</div>
<div class="a" style="left:611px;top:790.5px;width:1264px;height:1.5px;background:#48474b"></div>
<div class="t" style="left:611px;top:839px;font-size:28.5px;font-weight:bold;color:#ffffff">Generated Watermark</div>
<div class="a" style="left:612px;top:898.5px;width:398px;height:398px;border-radius:16px;background:#28272a;box-shadow:inset 0 0 0 1.5px #424144"></div>
<svg style="left:612px;top:898.5px" width="398" height="398" viewBox="0 0 398 398" font-family="Liberation Sans" font-weight="bold" fill="#c5c6c9"><text transform="matrix(0.9205,-0.3907,0.2079,0.9781,73.7,229.6)" x="-4" y="0" font-size="59">Internal</text><text transform="matrix(0.9205,-0.3907,0.2079,0.9781,76.9,292.3)" x="-4" y="0" font-size="59">Document</text></svg>
<div class="a" style="left:1043.5px;top:898.5px;width:398px;height:398px;border-radius:16px;background:#28272a;box-shadow:inset 0 0 0 1.5px #424144"></div>
<svg style="left:1043.5px;top:898.5px" width="398" height="398" viewBox="0 0 398 398" font-family="Liberation Sans" font-weight="bold" fill="#c4c5cb"><text transform="matrix(1,-0.364,-0.17,1,54.5,222)" x="-4" y="0" font-size="61">Internal</text><text transform="matrix(1,-0.364,-0.17,1,48.9,290.5)" x="-4" y="0" font-size="61">Document</text></svg>
<div class="a" style="left:1477px;top:898.5px;width:398px;height:398px;border-radius:16px;background:#28272a;box-shadow:inset 0 0 0 1.5px #424144"></div>
<svg style="left:1477px;top:898.5px" width="398" height="398" viewBox="0 0 398 398" font-family="Liberation Sans" font-weight="bold" fill="#b9babe"><text transform="matrix(0.787,-0.359,0.174,0.985,18.9,289.8)" x="-4" y="0" font-size="49">Internal Document</text></svg>
<div class="a" style="left:611px;top:1330px;width:1264px;height:77px;border-radius:14px;background:linear-gradient(90deg,#3b4b5f 0%,#404760 50%,#45435f 100%)"></div>
<svg style="left:641px;top:1354px" width="22" height="30" viewBox="0 0 22 30"><defs><radialGradient id="bulb" cx="0.4" cy="0.35" r="0.7"><stop offset="0" stop-color="#fffbe0"/><stop offset="1" stop-color="#f0dc8a"/></radialGradient></defs><path d="M11 1 C4.5 1 1 5.5 1 10.5 C1 15 4.5 17 6 20 V22 H16 V20 C17.5 17 21 15 21 10.5 C21 5.5 17.5 1 11 1 Z" fill="url(#bulb)"/><rect x="6.5" y="22.5" width="9" height="5" rx="1.5" fill="#b8b8c0"/></svg>
<div class="t" style="left:677px;top:1358px;font-size:25.6px;color:#f4f4f4">Closing this pop-up window will not save the image. Please download it first if needed.</div>
<div class="a" style="left:1706px;top:552px;width:225px;height:245px;border-radius:6px;box-shadow:inset 0 0 0 9px #27b14c"></div>

<div class="a" style="left:0;top:0;width:2486px;height:1680px;border-radius:20px;box-shadow:inset 0 0 0 2px #5b5959;pointer-events:none"></div>
</div>
</body></html>
